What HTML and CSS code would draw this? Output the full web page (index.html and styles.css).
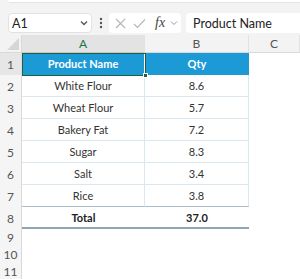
FILE: index.html
```html
<!DOCTYPE html>
<html>
<head>
<meta charset="utf-8">
<link rel="stylesheet" href="styles.css">
</head>
<body>
<div class="app">
  <div class="toolbar">
    <div class="ribbon-edge"></div>
    <div class="fbar">
      <div class="namebox">
        <span>A1</span>
        <svg class="chev" width="8" height="6" viewBox="0 0 8 6"><path d="M1 1.5 L4 4.5 L7 1.5" fill="none" stroke="#555" stroke-width="1.3"/></svg>
      </div>
      <svg class="kebab" width="4" height="12" viewBox="0 0 4 12"><circle cx="2" cy="2" r="1.2" fill="#555"/><circle cx="2" cy="6" r="1.2" fill="#555"/><circle cx="2" cy="10" r="1.2" fill="#555"/></svg>
      <div class="fbtns">
        <svg width="11" height="11" viewBox="0 0 11 11"><path d="M1 1 L10 10 M10 1 L1 10" stroke="#b5b5b5" stroke-width="1.1" fill="none"/></svg>
        <svg width="13" height="11" viewBox="0 0 13 11"><path d="M1 6 L4.5 9.5 L12 1.5" stroke="#b5b5b5" stroke-width="1.1" fill="none"/></svg>
        <span class="fx">fx</span>
        <svg width="8" height="6" viewBox="0 0 8 6"><path d="M1 1.5 L4 4.5 L7 1.5" fill="none" stroke="#999" stroke-width="1"/></svg>
      </div>
      <div class="finput">Product Name</div>
    </div>
  </div>
  <div class="sheet">
    <div class="corner"><svg width="12" height="12" viewBox="0 0 12 12"><path d="M12 0 L12 12 L0 12 Z" fill="#d6d6d6"/></svg></div>
    <div class="colhdr sel">A</div>
    <div class="colhdr">B</div>
    <div class="colhdr">C</div>

    <div class="rowhdr sel">1</div>
    <div class="cell head">Product Name</div>
    <div class="cell head last">Qty</div>
    <div class="cell blank"></div>

    <div class="rowhdr">2</div><div class="cell">White Flour</div><div class="cell last">8.6</div><div class="cell blank"></div>
    <div class="rowhdr">3</div><div class="cell">Wheat Flour</div><div class="cell last">5.7</div><div class="cell blank"></div>
    <div class="rowhdr">4</div><div class="cell">Bakery Fat</div><div class="cell last">7.2</div><div class="cell blank"></div>
    <div class="rowhdr">5</div><div class="cell">Sugar</div><div class="cell last">8.3</div><div class="cell blank"></div>
    <div class="rowhdr">6</div><div class="cell">Salt</div><div class="cell last">3.4</div><div class="cell blank"></div>
    <div class="rowhdr">7</div><div class="cell prev">Rice</div><div class="cell last prev">3.8</div><div class="cell blank"></div>
    <div class="rowhdr">8</div><div class="cell total">Total</div><div class="cell total">37.0</div><div class="cell blank"></div>

    <div class="rowhdr short">9</div><div class="cell blank"></div><div class="cell blank"></div><div class="cell blank"></div>
    <div class="rowhdr short">10</div><div class="cell blank"></div><div class="cell blank"></div><div class="cell blank"></div>
    <div class="rowhdr short">11</div><div class="cell blank"></div><div class="cell blank"></div><div class="cell blank"></div>

    <div class="selection"><span class="handle"></span></div>
  </div>
</div>
</body>
</html>
```

FILE: styles.css
```css
* { box-sizing: border-box; }
html, body { margin: 0; padding: 0; }
body {
  width: 300px;
  height: 279px;
  overflow: hidden;
  background: #ffffff;
  font-family: Lato, "Noto Sans", sans-serif;
  color: #333333;
}
.app { width: 300px; height: 279px; overflow: hidden; }

.toolbar {
  height: 35px;
  background: #f3f3f3;
  position: relative;
}
.ribbon-edge {
  height: 3px;
  margin-left: 8px;
  background: #ffffff;
  border-bottom-left-radius: 4px;
  border-bottom: 1px solid #e4e4e4;
}
.fbar {
  display: flex;
  align-items: center;
  padding: 8px 0 0 8px;
  height: 32px;
}
.namebox {
  width: 84px;
  height: 20px;
  background: #ffffff;
  border: 1px solid #e2e2e2;
  border-radius: 4px;
  display: flex;
  align-items: center;
  justify-content: space-between;
  padding: 0 3px 0 3px;
  font-size: 12.5px;
  color: #222;
}
.kebab { margin-left: 7px; }
.fbtns {
  margin-left: 6px;
  width: 72px;
  height: 20px;
  background: #ffffff;
  border-radius: 4px;
  display: flex;
  align-items: center;
  padding-left: 6px;
}
.fbtns svg:nth-child(2) { margin-left: 7px; }
.fx {
  margin-left: 9px;
  font-family: "Liberation Serif", serif;
  font-style: italic;
  font-size: 14px;
  color: #444;
  line-height: 1;
}
.fbtns svg:last-child { margin-left: 5px; }
.finput {
  margin-left: 5px;
  flex: 1;
  height: 20px;
  background: #ffffff;
  border-radius: 4px 0 0 4px;
  font-size: 12.5px;
  color: #222;
  display: flex;
  align-items: center;
  padding-left: 7px;
}

.sheet {
  position: relative;
  display: grid;
  grid-template-columns: 22px 123px 104px 51px;
  grid-template-rows: 18px repeat(8, 22px) repeat(3, 17px);
}
.corner {
  background: #f3f3f3;
  border-right: 1px solid #d9d9d9;
  border-bottom: 1px solid #d9d9d9;
  display: flex;
  align-items: flex-end;
  justify-content: flex-end;
  padding: 0 2px 2px 0;
}
.colhdr {
  background: #f3f3f3;
  border-bottom: 1px solid #d9d9d9;
  border-right: 1px solid #e2e2e2;
  font-size: 12px;
  color: #555;
  display: flex;
  align-items: center;
  justify-content: center;
}
.colhdr.sel {
  background: #e3e3e3;
  color: #217346;
  border-bottom: 1px solid #c8c8c8;
}
.rowhdr {
  background: #f5f5f5;
  border-right: 1px solid #d9d9d9;
  font-size: 12px;
  color: #555;
  display: flex;
  align-items: center;
  justify-content: center;
}
.rowhdr.sel { background: #e6e6e6; }
.cell {
  font-size: 11px;
  color: #333;
  display: flex;
  align-items: center;
  justify-content: center;
  border-bottom: 1px solid #dbe7ee;
  border-right: 1px solid #dbe7ee;
}
.cell.blank { border: none; }
.cell.head {
  background: #1c9ad6;
  color: #ffffff;
  font-weight: 700;
  border-bottom: 1px solid #1c9ad6;
  border-right: 1px solid #ffffff;
}
.cell.head.last { border-right: none; }
.cell.last { border-right: 1px solid #dbe7ee; }
.cell.prev { border-bottom: 1px solid #a9bcc7; }
.cell.total {
  font-weight: 700;
  color: #222;
  border-right: none;
  border-bottom: 2px solid #8ea6b4;
}
.selection {
  position: absolute;
  left: 22px;
  top: 18px;
  width: 124px;
  height: 23px;
  border: 1px solid #1f5f44;
  pointer-events: none;
}
.handle {
  position: absolute;
  right: -3px;
  bottom: -3px;
  width: 5px;
  height: 5px;
  background: #1f5f44;
  border: 1px solid #ffffff;
}
```
